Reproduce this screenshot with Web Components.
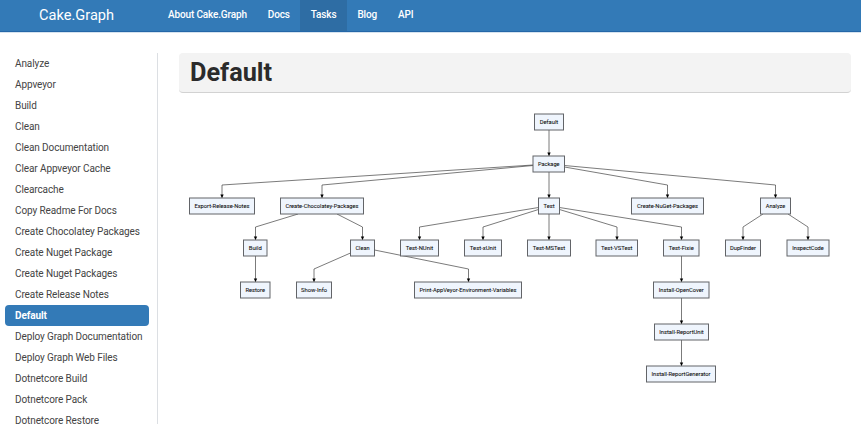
<!DOCTYPE html>
<html lang="en">
<head>
<meta charset="utf-8">
<title>Cake.Graph - Default</title>
<style>
html,body{margin:0;height:100%;overflow:hidden;background:#fff;font-family:Roboto,sans-serif;color:#333}
</style>
</head>
<body>
<docs-page></docs-page>
<script>
class Base extends HTMLElement {
  constructor() {
    super();
    this.attachShadow({mode: 'open'}).innerHTML = this.view();
  }
}

customElements.define('nav-link', class extends Base {
  view() {
    return `<style>
      :host{display:flex;box-sizing:border-box;height:31px;padding:7px 10.5px 0;font-size:10px;letter-spacing:-.15px;line-height:15px;font-weight:500;color:#fff;white-space:nowrap}
      :host([active]){background:#2e6da4}
    </style><slot></slot>`;
  }
});

customElements.define('top-bar', class extends Base {
  view() {
    return `<style>
      :host{display:flex;box-sizing:border-box;height:32px;background:#337ab7;border-bottom:1px solid #2467a8;box-shadow:0 1px 0 #d5e3ef}
      .brand{box-sizing:border-box;width:157.5px;padding:5px 0 0 39px;font-size:14.6px;line-height:20px;color:#fff;white-space:nowrap}
      nav{display:flex}
    </style><div class="brand">Cake.Graph</div><nav><slot></slot></nav>`;
  }
});

customElements.define('side-item', class extends Base {
  view() {
    return `<style>
      :host{display:block;box-sizing:border-box;height:21px;padding:0 10px;font-size:10px;letter-spacing:-.1px;line-height:21px;color:#444;white-space:nowrap;border-radius:4px}
      :host([active]){background:#337ab7;color:#fff;font-weight:700}
    </style><slot></slot>`;
  }
});

customElements.define('side-menu', class extends Base {
  view() {
    return `<style>
      :host{display:block;box-sizing:border-box;width:158px;height:371px;padding:0 8px 0 5px;border-right:1px solid #dcdfe3}
    </style><slot></slot>`;
  }
});

customElements.define('page-title', class extends Base {
  view() {
    return `<style>
      :host{display:block;box-sizing:border-box;height:40px;padding-left:11px;background:#f3f3f3;border-radius:4px;border-bottom:1px solid #d2d2d2}
      h1{margin:0;font-size:25.3px;line-height:39px;font-weight:700;color:#2b2b2b}
    </style><h1><slot></slot></h1>`;
  }
});

// label, left, right, top, text width
const NODES = [
  ['Default', 534.5, 563.5, 114, 18.5],
  ['Package', 533, 564.5, 156, 21.5],
  ['Export-Release-Notes', 189.5, 254.5, 198, 55],
  ['Create-Chocolatey-Packages', 280.5, 363.5, 198, 73],
  ['Test', 538.5, 559.5, 198, 11],
  ['Create-NuGet-Packages', 631.5, 703.5, 198, 61],
  ['Analyze', 760.5, 790.5, 198, 19.5],
  ['Build', 243.5, 267, 240, 13],
  ['Clean', 350.5, 374.5, 240, 14],
  ['Test-NUnit', 400.5, 438.5, 240, 27.5],
  ['Test-xUnit', 464.5, 501.5, 240, 26.5],
  ['Test-MSTest', 527.5, 570.5, 240, 32.5],
  ['Test-VSTest', 596, 637.5, 240, 31.5],
  ['Test-Fixie', 663.5, 699, 240, 25],
  ['DupFinder', 725.5, 760.5, 240, 26],
  ['InspectCode', 787, 829, 240, 31.5],
  ['Restore', 240.5, 270, 282, 19.5],
  ['Show-Info', 296.5, 331.5, 282, 26],
  ['Print-AppVeyor-Environment-Variables', 414.5, 521.5, 282, 97],
  ['Install-OpenCover', 653.5, 709, 282, 45],
  ['Install-ReportUnit', 654.5, 708.5, 324, 44.5],
  ['Install-ReportGenerator', 646.5, 715.5, 366, 59]
];
const EDGES = [
  '549,130 549,156', '533,165 222,185 222,198', '533,165.5 322,185 322,198',
  '549,172 549,198', '564.5,167 667.5,185 667.5,198', '564.5,165.5 775.5,185 775.5,198',
  '298,214 255.5,227 255.5,240', '337,214 362.5,227 362.5,240', '255.5,256 255.5,282',
  '350.5,253 314,269 314,282', '374.5,250 468.5,269 468.5,282',
  '538.5,207.5 419.5,227 419.5,240', '538.5,209.5 483,227 483,240', '549,214 549,240',
  '559.5,209.5 617,227 617,240', '559.5,207.5 681.5,227 681.5,240',
  '763,214 743,227 743,240', '788,214 808,227 808,240',
  '681.5,256 681.5,282', '681.5,298 681.5,324', '681.5,340 681.5,366'
];

customElements.define('task-graph', class extends Base {
  view() {
    const edges = EDGES.map(p => {
      const [x, y] = p.split(' ').pop().split(',').map(Number);
      return `<polyline points="${p}"/><path d="M${x - 1.7} ${y - 3.5}h3.4L${x} ${y}z"/>`;
    }).join('');
    const nodes = NODES.map(([t, l, r, y, w]) =>
      `<rect x="${l}" y="${y}" width="${r - l}" height="16"/>
       <text x="${(l + r) / 2}" y="${y + 9.6}" textLength="${w}" lengthAdjust="spacingAndGlyphs">${t}</text>`).join('');
    return `<style>
      :host{display:block;height:320px}
      svg{display:block;width:100%;height:100%}
      polyline{fill:none;stroke:#333;stroke-width:.65}
      path{fill:#000}
      rect{fill:#eff5fd;stroke:#626468;stroke-width:1}
      text{font:6px Roboto,sans-serif;fill:#111;stroke:#111;stroke-width:.08;text-anchor:middle}
    </style><svg viewBox="179 104 672 320" preserveAspectRatio="xMinYMin meet">${edges}${nodes}</svg>`;
  }
});

customElements.define('docs-page', class extends Base {
  view() {
    const items = ['Analyze','Appveyor','Build','Clean','Clean Documentation','Clear Appveyor Cache','Clearcache','Copy Readme For Docs','Create Chocolatey Packages','Create Nuget Package','Create Nuget Packages','Create Release Notes','Default','Deploy Graph Documentation','Deploy Graph Web Files','Dotnetcore Build','Dotnetcore Pack','Dotnetcore Restore'];
    return `<style>
      :host{display:block;height:424px}
      .body{display:flex;padding-top:21px}
      main{width:672px;margin-left:21px}
      task-graph{margin-top:11px}
    </style>
    <top-bar><nav-link>About Cake.Graph</nav-link><nav-link>Docs</nav-link><nav-link active>Tasks</nav-link><nav-link>Blog</nav-link><nav-link>API</nav-link></top-bar>
    <div class="body">
      <side-menu>${items.map(t => `<side-item${t === 'Default' ? ' active' : ''}>${t}</side-item>`).join('')}</side-menu>
      <main><page-title>Default</page-title><task-graph></task-graph></main>
    </div>`;
  }
});
</script>
</body>
</html>
